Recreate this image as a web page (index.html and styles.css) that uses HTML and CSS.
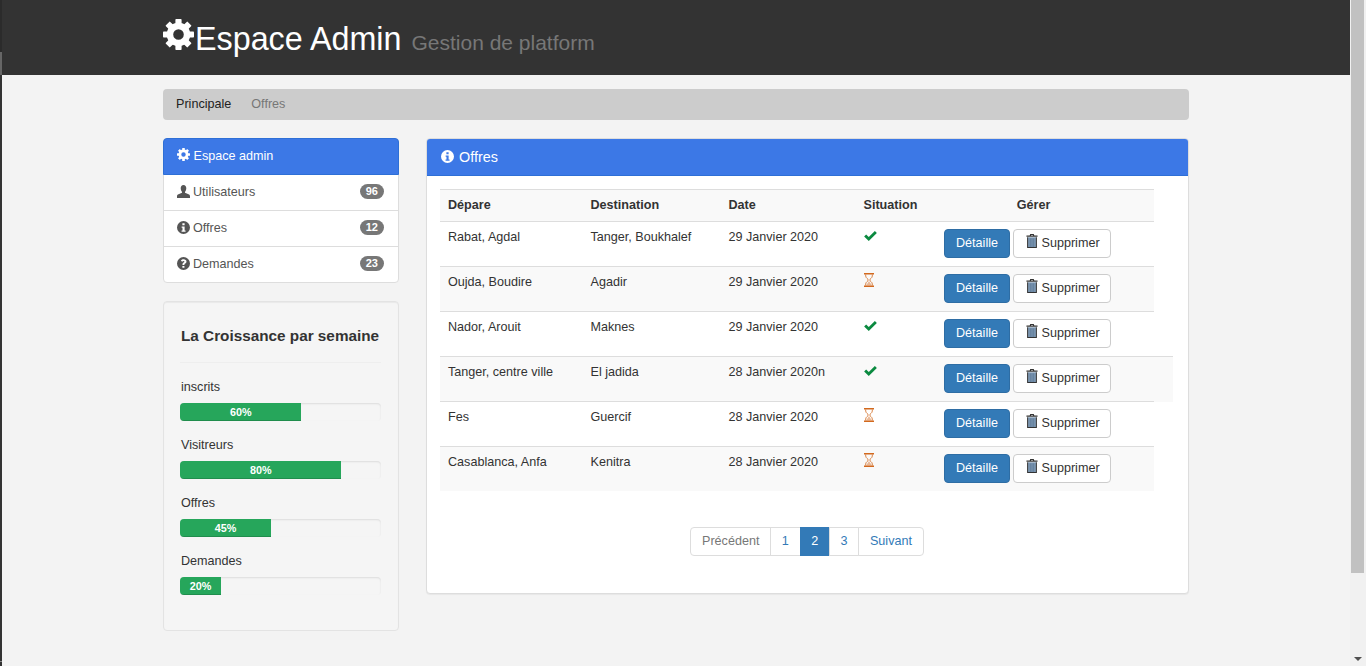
FILE: index.html
```html
<!DOCTYPE html>
<html lang="fr">
<head>
    <meta charset="UTF-8">
    <meta name="viewport" content="width=device-width, initial-scale=1.0">
    <title>Espace Admin</title>
    <link rel="stylesheet" href="styles.css">
</head>
<body>
    <svg class="icon-defs" aria-hidden="true">
        <symbol id="i-cog" viewBox="0 0 24 24">
            <circle cx="12" cy="12" r="6.6" fill="none" stroke="currentColor" stroke-width="5"/>
            <g fill="currentColor">
                <rect x="9.6" y="0" width="4.8" height="5" rx=".6"/>
                <rect x="9.6" y="0" width="4.8" height="5" rx=".6" transform="rotate(45 12 12)"/>
                <rect x="9.6" y="0" width="4.8" height="5" rx=".6" transform="rotate(90 12 12)"/>
                <rect x="9.6" y="0" width="4.8" height="5" rx=".6" transform="rotate(135 12 12)"/>
                <rect x="9.6" y="0" width="4.8" height="5" rx=".6" transform="rotate(180 12 12)"/>
                <rect x="9.6" y="0" width="4.8" height="5" rx=".6" transform="rotate(225 12 12)"/>
                <rect x="9.6" y="0" width="4.8" height="5" rx=".6" transform="rotate(270 12 12)"/>
                <rect x="9.6" y="0" width="4.8" height="5" rx=".6" transform="rotate(315 12 12)"/>
            </g>
        </symbol>
        <symbol id="i-user" viewBox="0 0 14 14">
            <path fill="currentColor" d="M7 0C5 0 4 1.5 4 3.4c0 1.5.6 3 1.4 3.9v1L1.6 10C.6 10.500 0 11 0 12v2h14v-2c0-1-.6-1.500-1.600-2L8.600 8.300v-1C9.400 6.400 10 4.900 10 3.400 10 1.500 9 0 7 0z"/>
        </symbol>
        <symbol id="i-info" viewBox="0 0 14 14">
            <path fill="currentColor" fill-rule="evenodd" d="M7 0a7 7 0 1 0 0 14A7 7 0 0 0 7 0zM5.800 2.400h2.400v2.200H5.800zM5 5.800h3.200v4.400h1v1.500H4.900v-1.500h1V7.300H5z"/>
        </symbol>
        <symbol id="i-question" viewBox="0 0 14 14">
            <path fill="currentColor" fill-rule="evenodd" d="M7 0a7 7 0 1 0 0 14A7 7 0 0 0 7 0zM7.100 2.300c1.900 0 3.100 1 3.100 2.500 0 1.100-.6 1.700-1.400 2.200-.6.400-.8.600-.8 1.200v.3H5.900v-.5c0-1 .4-1.600 1.200-2.100.6-.4.9-.6.900-1 0-.4-.4-.7-.9-.7-.6 0-1.100.3-1.600.8L4.200 3.700c.7-.9 1.700-1.400 2.900-1.400zM5.800 9.600H8v2H5.800z"/>
        </symbol>
        <symbol id="i-ok" viewBox="0 0 14 11">
            <path fill="currentColor" d="M0 6l2.200-2.200 2.900 2.900L11.800 0 14 2.200 5.100 11z"/>
        </symbol>
        <symbol id="i-hourglass" viewBox="0 0 10 14">
            <path fill="currentColor" d="M0 0h10v1.500H0zM0 12.500h10V14H0z"/>
            <path fill="currentColor" opacity=".45" d="M5 8L2.200 12.500h5.600z"/>
            <path fill="none" stroke="currentColor" stroke-width="1" opacity=".8" d="M1.700 1.500V3c0 2 2.600 3 2.600 4s-2.600 2-2.600 4v1.500M8.300 1.500V3c0 2-2.600 3-2.600 4s2.600 2 2.600 4v1.500"/>
        </symbol>
        <symbol id="i-trash" viewBox="0 0 13 15">
            <path fill="currentColor" d="M4.600 0h3.800l.6 1.500h3.500V3H.5V1.500H4zM5.500 1.100l-.2.400h2.400l-.2-.4z"/>
            <path fill="#7f9ab5" d="M2 3.500h9v11H2z"/>
            <path fill="currentColor" d="M1.200 3.500h1.100V15H1.200zM10.700 3.500h1.100V15h-1.100zM1.200 14h10.600v1H1.200z"/>
            <path fill="#4d6a88" d="M4.200 4.500h.6V14h-.6zM6.200 4.500h.6V14h-.6zM8.200 4.500h.6V14h-.6z"/>
        </symbol>
    </svg>

    <div class="screen">
        <div class="edge"></div>

        <div class="page">
            <header class="site-header">
                <div class="container">
                    <h1><svg class="cog-big"><use href="#i-cog"/></svg>Espace Admin <small>Gestion de platform</small></h1>
                </div>
            </header>

            <div class="container">
                <nav class="breadcrumb">
                    <a class="crumb crumb-active" href="#">Principale</a>
                    <a class="crumb" href="#">Offres</a>
                </nav>

                <div class="columns">
                    <aside class="sidebar">
                        <div class="side-list">
                            <div class="side-head"><svg class="icon"><use href="#i-cog"/></svg> Espace admin</div>
                            <div class="side-item"><svg class="icon"><use href="#i-user"/></svg> Utilisateurs <span class="badge">96</span></div>
                            <div class="side-item"><svg class="icon"><use href="#i-info"/></svg> Offres <span class="badge">12</span></div>
                            <div class="side-item"><svg class="icon"><use href="#i-question"/></svg> Demandes <span class="badge">23</span></div>
                        </div>

                        <div class="well">
                            <h4>La Croissance par semaine</h4>
                            <hr>
                            <div class="stat">
                                <div class="stat-label">inscrits</div>
                                <div class="progress"><div class="progress-bar" style="width: 60%">60%</div></div>
                            </div>
                            <div class="stat">
                                <div class="stat-label">Visitreurs</div>
                                <div class="progress"><div class="progress-bar" style="width: 80%">80%</div></div>
                            </div>
                            <div class="stat">
                                <div class="stat-label">Offres</div>
                                <div class="progress"><div class="progress-bar" style="width: 45%">45%</div></div>
                            </div>
                            <div class="stat">
                                <div class="stat-label">Demandes</div>
                                <div class="progress"><div class="progress-bar" style="width: 20%">20%</div></div>
                            </div>
                        </div>
                    </aside>

                    <main class="panel">
                        <div class="panel-head"><svg class="icon"><use href="#i-info"/></svg> Offres</div>
                        <div class="panel-body">
                            <table class="offers">
                                <colgroup>
                                    <col class="col-from">
                                    <col class="col-to">
                                    <col class="col-date">
                                    <col class="col-state">
                                    <col class="col-manage">
                                    <col class="col-extra">
                                </colgroup>
                                <tbody>
                                    <tr>
                                        <th>Dépare</th>
                                        <th>Destination</th>
                                        <th>Date</th>
                                        <th>Situation</th>
                                        <th class="th-manage">Gérer</th>
                                    </tr>
                                    <tr>
                                        <td>Rabat, Agdal</td>
                                        <td>Tanger, Boukhalef</td>
                                        <td>29 Janvier 2020</td>
                                        <td><svg class="state state-ok"><use href="#i-ok"/></svg></td>
                                        <td><div class="actions"><a class="btn btn-primary" href="#">Détaille</a><a class="btn btn-default" href="#"><svg class="icon-trash"><use href="#i-trash"/></svg> Supprimer</a></div></td>
                                    </tr>
                                    <tr>
                                        <td>Oujda, Boudire</td>
                                        <td>Agadir</td>
                                        <td>29 Janvier 2020</td>
                                        <td><svg class="state state-wait"><use href="#i-hourglass"/></svg></td>
                                        <td><div class="actions"><a class="btn btn-primary" href="#">Détaille</a><a class="btn btn-default" href="#"><svg class="icon-trash"><use href="#i-trash"/></svg> Supprimer</a></div></td>
                                    </tr>
                                    <tr>
                                        <td>Nador, Arouit</td>
                                        <td>Maknes</td>
                                        <td>29 Janvier 2020</td>
                                        <td><svg class="state state-ok"><use href="#i-ok"/></svg></td>
                                        <td><div class="actions"><a class="btn btn-primary" href="#">Détaille</a><a class="btn btn-default" href="#"><svg class="icon-trash"><use href="#i-trash"/></svg> Supprimer</a></div></td>
                                    </tr>
                                    <tr>
                                        <td>Tanger, centre ville</td>
                                        <td>El jadida</td>
                                        <td>28 Janvier 2020n</td>
                                        <td><svg class="state state-ok"><use href="#i-ok"/></svg></td>
                                        <td><div class="actions"><a class="btn btn-primary" href="#">Détaille</a><a class="btn btn-default" href="#"><svg class="icon-trash"><use href="#i-trash"/></svg> Supprimer</a></div></td>
                                        <td></td>
                                    </tr>
                                    <tr>
                                        <td>Fes</td>
                                        <td>Guercif</td>
                                        <td>28 Janvier 2020</td>
                                        <td><svg class="state state-wait"><use href="#i-hourglass"/></svg></td>
                                        <td><div class="actions"><a class="btn btn-primary" href="#">Détaille</a><a class="btn btn-default" href="#"><svg class="icon-trash"><use href="#i-trash"/></svg> Supprimer</a></div></td>
                                    </tr>
                                    <tr>
                                        <td>Casablanca, Anfa</td>
                                        <td>Kenitra</td>
                                        <td>28 Janvier 2020</td>
                                        <td><svg class="state state-wait"><use href="#i-hourglass"/></svg></td>
                                        <td><div class="actions"><a class="btn btn-primary" href="#">Détaille</a><a class="btn btn-default" href="#"><svg class="icon-trash"><use href="#i-trash"/></svg> Supprimer</a></div></td>
                                    </tr>
                                </tbody>
                            </table>

                            <div class="pagination">
                                <a class="page-link page-prev" href="#">Précédent</a>
                                <a class="page-link" href="#">1</a>
                                <a class="page-link page-current" href="#">2</a>
                                <a class="page-link" href="#">3</a>
                                <a class="page-link" href="#">Suivant</a>
                            </div>
                        </div>
                    </main>
                </div>
            </div>
        </div>

        <div class="scrollbar">
            <div class="scroll-thumb"></div>
            <div class="scroll-arrow"></div>
        </div>
    </div>
</body>
</html>
```

FILE: styles.css
```css
* {
    box-sizing: border-box;
}

body {
    margin: 0;
    font-family: "Liberation Sans", Arial, sans-serif;
    font-size: 12.6px;
    color: #333;
    background-color: #f3f3f3;
}

a {
    text-decoration: none;
}

.icon-defs {
    display: none;
}

.screen {
    display: flex;
    height: 666px;
    overflow: hidden;
}

.edge {
    width: 2px;
    flex-shrink: 0;
    background: linear-gradient(to bottom, #2b2b2b 0, #2b2b2b 52px, #666 52px, #666 75px, #333 75px, #333 661px, #888 661px, #888 662px, #333 662px);
}

.page {
    flex: 1;
    min-width: 0;
}

.scrollbar {
    width: 16px;
    flex-shrink: 0;
    position: relative;
    background-color: #f1f1f1;
}

.scroll-thumb {
    width: 13px;
    height: 573px;
    margin-left: 1px;
    background-color: #c1c1c1;
}

.scroll-arrow {
    position: absolute;
    left: 4px;
    bottom: 5px;
    width: 0;
    height: 0;
    border-left: 4px solid transparent;
    border-right: 4px solid transparent;
    border-top: 4px solid #505050;
}

.container {
    width: 1026px;
    margin: 0 auto;
}

.site-header {
    height: 75px;
    background-color: #333;
}

.site-header h1 {
    margin: 0;
    padding-top: 19px;
    font-size: 32.3px;
    font-weight: normal;
    line-height: 38px;
    color: #fff;
    white-space: nowrap;
}

.site-header small {
    margin-left: 1px;
    font-size: 21px;
    color: #777;
}

.cog-big {
    width: 31px;
    height: 31px;
    margin-right: 1px;
    color: #fff;
}

.breadcrumb {
    display: flex;
    gap: 20px;
    height: 31px;
    margin-top: 14px;
    padding: 0 13px 2px;
    align-items: center;
    background-color: #ccc;
    border-radius: 4px;
}

.crumb {
    color: #777;
}

.crumb-active {
    color: #222;
}

.columns {
    display: flex;
    gap: 27px;
    margin-top: 18px;
    align-items: flex-start;
}

.sidebar {
    width: 236px;
    flex-shrink: 0;
}

.icon {
    width: 13px;
    height: 13px;
    vertical-align: -1px;
}

.icon-trash {
    width: 12px;
    height: 14px;
    vertical-align: -1px;
}

.side-list {
    background-color: #fff;
    border: 1px solid #ddd;
    border-radius: 4px;
}

.side-head {
    height: 37px;
    margin: -1px -1px 0;
    padding: 0 13px;
    line-height: 35px;
    color: #fff;
    background-color: #3c78e6;
    border: 1px solid #2e6fd6;
    border-radius: 4px 4px 0 0;
}

.side-item {
    display: flex;
    align-items: center;
    gap: 3px;
    height: 36px;
    padding: 0 14px 2px 13px;
    color: #555;
    border-bottom: 1px solid #ddd;
}

.side-item:last-child {
    height: 35px;
    border-bottom: 0;
}

.badge {
    margin-left: auto;
    padding: 0 6px;
    min-width: 24px;
    height: 15px;
    font-size: 11px;
    font-weight: bold;
    line-height: 15px;
    text-align: center;
    color: #fff;
    background-color: #777;
    border-radius: 8px;
}

.well {
    height: 330px;
    margin-top: 18px;
    padding: 25px 16.6px 0 16.4px;
    background-color: #f5f5f5;
    border: 1px solid #e3e3e3;
    border-radius: 4px;
    box-shadow: inset 0 1px 1px rgba(0, 0, 0, 0.05);
}

.well h4 {
    margin: 0 0 0 .6px;
    font-size: 15.3px;
    line-height: 18px;
    white-space: nowrap;
    color: #333;
}

.well hr {
    height: 1px;
    margin: 17px 0 16px;
    border: 0;
    background-color: #eee;
}

.stat {
    margin-bottom: 16px;
}

.stat-label {
    height: 17px;
    margin: 0 0 7px .6px;
    line-height: 17px;
}

.progress {
    height: 18px;
    background-color: #f5f5f5;
    border-radius: 4px;
    box-shadow: inset 0 1px 2px rgba(0, 0, 0, 0.1);
    overflow: hidden;
}

.progress-bar {
    height: 18px;
    font-size: 10.8px;
    font-weight: bold;
    line-height: 18px;
    text-align: center;
    color: #fff;
    background-color: #26a65b;
    box-shadow: inset 0 -1px 0 rgba(0, 0, 0, 0.15);
}

.panel {
    flex: 1;
    height: 456px;
    background-color: #fff;
    border: 1px solid #ddd;
    border-radius: 4px;
    box-shadow: 0 1px 1px rgba(0, 0, 0, 0.05);
}

.panel-head {
    height: 37px;
    padding: 0 14px;
    font-size: 14.4px;
    line-height: 36px;
    color: #fff;
    background-color: #3c78e6;
    border-bottom: 1px solid #2e6fd6;
    border-radius: 3px 3px 0 0;
}

.panel-head .icon {
    margin-right: 1px;
}

.panel-body {
    padding: 13px;
}

.offers {
    width: 733px;
    table-layout: fixed;
    border-collapse: collapse;
}

.col-from {
    width: 142.5px;
}

.col-to {
    width: 138px;
}

.col-date {
    width: 135px;
}

.col-state {
    width: 80.5px;
}

.col-manage {
    width: 218px;
}

.col-extra {
    width: 19px;
}

.offers th,
.offers td {
    padding: 7px 8px 8px;
    text-align: left;
    vertical-align: top;
    line-height: 16px;
    border-top: 1px solid #ddd;
}

.offers th {
    height: 32px;
    padding-bottom: 7px;
    line-height: 17px;
}

.offers .th-manage {
    padding-right: 31px;
    text-align: center;
}

.offers tr:nth-child(odd) th,
.offers tr:nth-child(odd) td {
    background-color: #f9f9f9;
}

.offers tr:nth-child(even) td {
    background-color: #fff;
}

.offers td:last-child:empty {
    padding: 0;
}

.state {
    display: block;
}

.state-ok {
    width: 13px;
    height: 10px;
    margin-top: 2px;
    color: #0b8a40;
}

.state-wait {
    width: 10px;
    height: 14px;
    margin-top: -1px;
    color: #d2691e;
}

.actions {
    display: flex;
    gap: 3px;
}

.btn {
    display: block;
    height: 29px;
    line-height: 27px;
    border: 1px solid transparent;
    border-radius: 4px;
    white-space: nowrap;
}

.btn-primary {
    padding: 0 11px;
    color: #fff;
    background-color: #337ab7;
    border-color: #2e6da4;
}

.btn-default {
    padding: 0 10px 0 12px;
    color: #333;
    background-color: #fff;
    border-color: #ccc;
}

.pagination {
    display: flex;
    justify-content: center;
    margin-top: 36px;
}

.page-link {
    height: 29px;
    padding: 0 10.7px;
    line-height: 26px;
    color: #337ab7;
    background-color: #fff;
    border: 1px solid #ddd;
    margin-left: -1px;
}

.page-link:first-child {
    border-radius: 4px 0 0 4px;
}

.page-link:last-child {
    border-radius: 0 4px 4px 0;
}

.page-prev {
    color: #777;
}

.page-current {
    color: #fff;
    background-color: #337ab7;
    border-color: #337ab7;
}
```
